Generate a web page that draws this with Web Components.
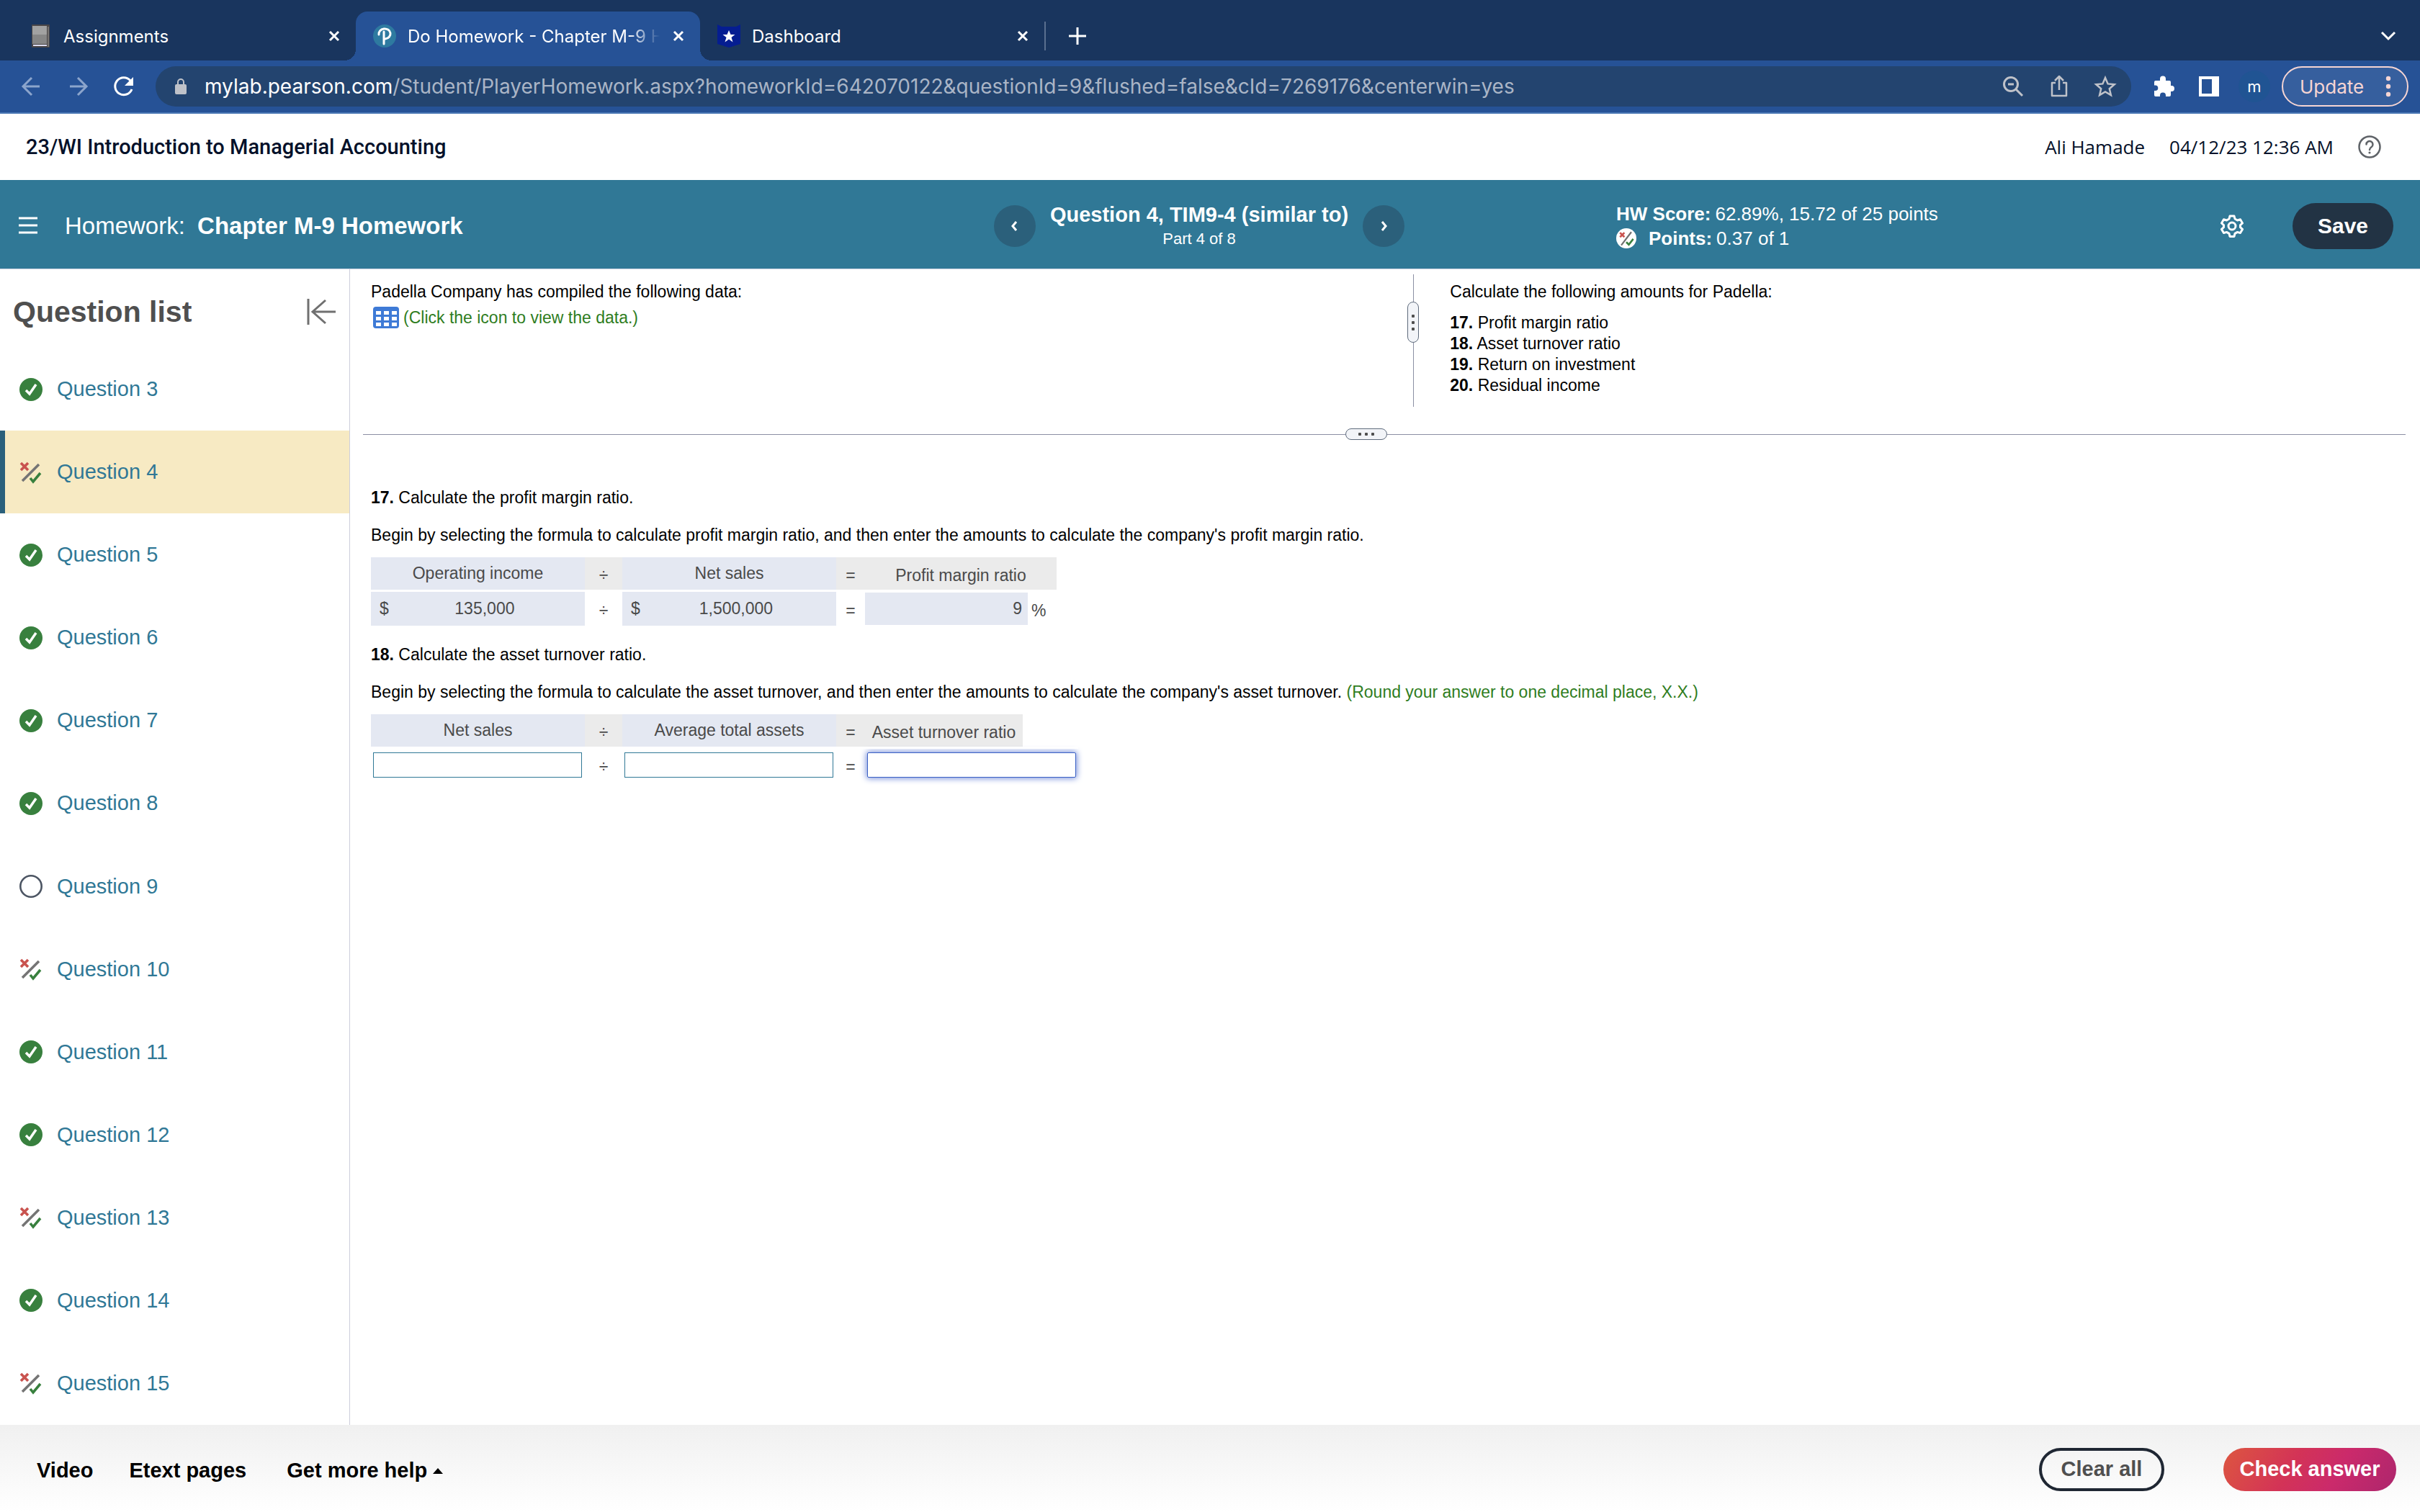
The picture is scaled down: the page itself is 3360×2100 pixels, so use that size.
<!DOCTYPE html>
<html lang="en">
<head>
<meta charset="utf-8">
<title>Do Homework - Chapter M-9 Homework</title>
<style>
  body {
    margin: 0;
    min-height: 100vh;
    display: flex;
    flex-direction: column;
    background: #ffffff;
    color: #000000;
    font-family: "Liberation Sans", Arial, sans-serif;
    font-size: 23px;
    line-height: 29px;
  }
  main { flex: 1; display: flex; }
</style>
</head>
<body>
  <browser-chrome></browser-chrome>
  <course-header user="Ali Hamade" time="04/12/23 12:36 AM">23/WI Introduction to Managerial Accounting</course-header>
  <homework-bar></homework-bar>
  <main>
    <question-list>
      <question-item status="correct">Question 3</question-item>
      <question-item status="partial" current>Question 4</question-item>
      <question-item status="correct">Question 5</question-item>
      <question-item status="correct">Question 6</question-item>
      <question-item status="correct">Question 7</question-item>
      <question-item status="correct">Question 8</question-item>
      <question-item status="open">Question 9</question-item>
      <question-item status="partial">Question 10</question-item>
      <question-item status="correct">Question 11</question-item>
      <question-item status="correct">Question 12</question-item>
      <question-item status="partial">Question 13</question-item>
      <question-item status="correct">Question 14</question-item>
      <question-item status="partial">Question 15</question-item>
    </question-list>
    <problem-panel></problem-panel>
  </main>
  <action-bar></action-bar>

<script>
const icons = {
  close: '<path d="M4 4l12 12M16 4L4 16" fill="none" stroke="currentColor" stroke-width="3"/>',
  plus: '<path d="M12 0v24M0 12h24" fill="none" stroke="currentColor" stroke-width="3"/>',
  chevronDown: '<path d="M3 7l9 9 9-9" fill="none" stroke="currentColor" stroke-width="3"/>',
  back: '<path d="M27 16H4M16 4L4 16l12 12" fill="none" stroke="currentColor" stroke-width="3"/>',
  forward: '<path d="M5 16h23M16 4l12 12-12 12" fill="none" stroke="currentColor" stroke-width="3"/>',
  reload: '<path d="M27 20a12 12 0 1 1-2-12" fill="none" stroke="currentColor" stroke-width="3"/><path d="M29 3v12H17z" fill="currentColor"/>',
  lock: '<rect x="3" y="9" width="16" height="14" rx="2" fill="currentColor"/><path d="M7 10V6a4 4 0 0 1 8 0v4" fill="none" stroke="currentColor" stroke-width="2"/>',
  zoomOut: '<circle cx="13" cy="13" r="9.500" fill="none" stroke="currentColor" stroke-width="3"/><path d="M20 20l9 9M9 13h8" fill="none" stroke="currentColor" stroke-width="3"/>',
  share: '<path d="M11 11H6v18h20V11h-5M16 21V3M10 8l6-6 6 6" fill="none" stroke="currentColor" stroke-width="2.500" stroke-linejoin="round"/>',
  star: '<path d="M16 4l3.600 8.400 9.100.8-6.900 6 2.100 8.900-7.900-4.700-7.900 4.700 2.100-8.900-6.900-6 9.100-.8z" fill="none" stroke="currentColor" stroke-width="2.500" stroke-linejoin="miter"/>',
  puzzle: '<path d="M12 5.500a4 4 0 0 1 8 0V8h5a2 2 0 0 1 2 2v5h1a4 4 0 0 1 0 8h-1v5a2 2 0 0 1-2 2h-5v-1.500a4 4 0 0 0-8 0V30H6a2 2 0 0 1-2-2v-6h1.500a3.800 3.800 0 0 0 0-7.600H4V10a2 2 0 0 1 2-2h6z" fill="currentColor"/>',
  panel: '<path d="M2 2h28v28H2zM6 6v20h14V6z" fill="currentColor" fill-rule="evenodd"/>',
  dots: '<circle cx="5" cy="4" r="3.200" fill="currentColor"/><circle cx="5" cy="15" r="3.200" fill="currentColor"/><circle cx="5" cy="26" r="3.200" fill="currentColor"/>',
  book: '<rect x="4" y="0" width="25" height="32" rx="1" fill="#4a4647"/><rect x="5" y="2" width="20" height="25" fill="#a2a2a2"/><rect x="5" y="14" width="20" height="13" fill="#868686"/><rect x="6" y="28" width="19" height="2" fill="#dcdcf0"/><path d="M27 3v28" stroke="#a2a2a2" stroke-width="1"/>',
  pearson: '<circle cx="16" cy="16" r="16" fill="#2e7aa0"/><path d="M8 14a8 7 0 1 1 9 6M15 10v17" fill="none" stroke="#ffffff" stroke-width="3" stroke-linecap="round"/>',
  shield: '<path d="M0 0l6 3h20l6-3v27l-16 5L0 27z" fill="#051d91"/><path d="M16 8l2.500 6h6l-5 4 2 6.500-5.500-4-5.500 4 2-6.500-5-4h6z" fill="#ffffff"/>',
  help: '<circle cx="16" cy="16" r="14.500" fill="none" stroke="currentColor" stroke-width="2.500"/><path d="M11.500 12.500a4.500 4.500 0 1 1 7 3.800c-1.800 1.200-2.500 2-2.500 3.700" fill="none" stroke="currentColor" stroke-width="2.500" stroke-linecap="round"/><circle cx="16" cy="24" r="1.600" fill="currentColor"/>',
  menu: '<path d="M0 2h26M0 12h26M0 22h26" stroke="currentColor" stroke-width="3"/>',
  left: '<path d="M11 3L6 9l5 6" fill="none" stroke="currentColor" stroke-width="3"/>',
  right: '<path d="M7 3l5 6-5 6" fill="none" stroke="currentColor" stroke-width="3"/>',
  gear: '<path d="M13 2h6l1 4 3.500 2 4-1.200 3 5.200-3 2.700v3l3 2.700-3 5.200-4-1.200-3.500 2-1 4h-6l-1-4-3.500-2-4 1.200-3-5.200 3-2.700v-3l-3-2.700 3-5.200 4 1.200 3.500-2z" fill="none" stroke="currentColor" stroke-width="3" stroke-linejoin="round"/><circle cx="16" cy="16" r="5" fill="none" stroke="currentColor" stroke-width="3"/>',
  collapse: '<path d="M2 2v36M40 20H8M26 4L8 20l18 16" fill="none" stroke="currentColor" stroke-width="3"/>',
  correct: '<circle cx="16" cy="16" r="16" fill="#38803e"/><path d="M9 17l5 5 9-13" fill="none" stroke="#ffffff" stroke-width="3.500"/>',
  partial: '<path d="M2 3l10 10M12 3L2 13" stroke="#c9534f" stroke-width="3.600"/><path d="M27 5L4 28" stroke="#747474" stroke-width="3.600"/><path d="M15 24l4 5 10-12" fill="none" stroke="#38803e" stroke-width="3.600"/>',
  open: '<circle cx="16" cy="16" r="14.700" fill="none" stroke="#4c5563" stroke-width="2.600"/>',
  score: '<circle cx="16" cy="16" r="16" fill="#ffffff"/><path d="M6 7l7 7M13 7l-7 7" stroke="#c9534f" stroke-width="3"/><path d="M24 6L8 27" stroke="#707070" stroke-width="2.500"/><path d="M16 22l4 4 7-9" fill="none" stroke="#38803e" stroke-width="3"/>',
  grid: '<rect width="36" height="30" rx="4" fill="#3e7ad6"/><path d="M4 6h7v5H4zm11 0h7v5h-7zm11 0h7v5h-7zM4 14h7v5H4zm11 0h7v5h-7zm11 0h7v5h-7zM4 22h7v5H4zm11 0h7v5h-7zm11 0h7v5h-7z" fill="#ffffff"/>',
  caretUp: '<path d="M0 9l8-9 8 9z" fill="currentColor"/>'
};

function icon(name, width, height = width, box = `0 0 ${width} ${height}`) {
  return `<svg width="${width}" height="${height}" viewBox="${box}" aria-hidden="true">${icons[name]}</svg>`;
}

// Shared by every shadow root
const base = `
  :host, * { box-sizing: border-box; }
  svg { display: block; flex: none; }
  button, input { font: inherit; color: inherit; margin: 0; }
  button { background: none; border: 0; padding: 0; cursor: pointer; }
  a { color: inherit; text-decoration: none; }
  p, h1, h2, ol, ul { margin: 0; padding: 0; font-size: inherit; font-weight: inherit; }
`;

class BaseElement extends HTMLElement {
  constructor() {
    super();
    this.attachShadow({ mode: 'open' });
  }

  connectedCallback() {
    this.shadowRoot.innerHTML = `<style>${base}${this.styles()}</style>${this.template()}`;
  }
}

class BrowserTab extends BaseElement {
  styles() {
    return `
      :host {
        display: flex;
        align-items: center;
        gap: 16px;
        width: 478px;
        height: 68px;
        padding: 0 20px 0 24px;
        position: relative;
        color: #ffffff;
      }
      :host([active]) { background: #265296; border-radius: 16px 16px 0 0; }
      :host([active])::before, :host([active])::after {
        content: '';
        position: absolute;
        bottom: 0;
        width: 16px; height: 16px;
      }
      :host([active])::before { left: -16px; background: radial-gradient(circle at 0 0, transparent 16px, #265296 16px); }
      :host([active])::after { right: -16px; background: radial-gradient(circle at 100% 0, transparent 16px, #265296 16px); }
      .title { flex: 1; min-width: 0; overflow: hidden; white-space: nowrap; }
      :host([active]) .title {
        -webkit-mask-image: linear-gradient(to right, #000 88%, transparent 100%);
        mask-image: linear-gradient(to right, #000 88%, transparent 100%);
      }
    `;
  }

  template() {
    return `
      ${icon(this.getAttribute('icon'), 32)}
      <span class="title"><slot></slot></span>
      <button aria-label="Close tab">${icon('close', 20)}</button>
    `;
  }
}

class BrowserChrome extends BaseElement {
  styles() {
    return `
      :host { display: block; font-family: Inter, Roboto, sans-serif; font-size: 24px; color: #ffffff; }
      .strip { display: flex; align-items: center; height: 84px; padding: 16px 32px 0 16px; background: #19355e; }
      .new { display: flex; align-items: center; justify-content: center; width: 90px; height: 40px; border-left: 2px solid #5a6f8f; }
      .more { margin-left: auto; }
      .toolbar { display: flex; align-items: center; gap: 32px; height: 74px; padding: 0 16px 0 28px; background: #265296; border-bottom: 2px solid #4b78b5; }
      .dim { color: #8ca5cc; }
      .address { flex: 1; display: flex; align-items: center; gap: 32px; height: 56px; margin-left: -4px; padding: 0 20px 0 24px; border-radius: 28px; background: #23446f; color: #bfc2c9; }
      .url { flex: 1; margin-left: -10px; font-size: 28px; color: #aab5c6; }
      .url b { font-weight: 400; color: #ffffff; }
      .actions { display: flex; align-items: center; gap: 32px; margin-left: -4px; }
      .avatar { display: flex; align-items: center; justify-content: center; width: 44px; height: 44px; margin: 0 -7px; border-radius: 50%; background: #205493; font-size: 22px; }
      .update { display: flex; align-items: center; justify-content: space-between; width: 176px; height: 56px; margin-left: -9px; padding: 0 21px 0 23px; border: 2px solid #f6d5d3; border-radius: 28px; background: #365f9e; color: #f6d5d3; font-size: 26px; }
    `;
  }

  template() {
    return `
      <div class="strip">
        <browser-tab icon="book">Assignments</browser-tab>
        <browser-tab icon="pearson" active>Do Homework - Chapter M-9 Homework</browser-tab>
        <browser-tab icon="shield">Dashboard</browser-tab>
        <button class="new" aria-label="New tab">${icon('plus', 24)}</button>
        <button class="more" aria-label="Search tabs">${icon('chevronDown', 24)}</button>
      </div>
      <div class="toolbar">
        <button class="dim" aria-label="Back">${icon('back', 32)}</button>
        <button class="dim" aria-label="Forward">${icon('forward', 32)}</button>
        <button aria-label="Reload">${icon('reload', 32)}</button>
        <div class="address">
          ${icon('lock', 22, 24)}
          <span class="url"><b>mylab.pearson.com</b>/Student/PlayerHomework.aspx?homeworkId=642070122&amp;questionId=9&amp;flushed=false&amp;cId=7269176&amp;centerwin=yes</span>
          <button aria-label="Zoom">${icon('zoomOut', 32)}</button>
          <button aria-label="Share">${icon('share', 32)}</button>
          <button aria-label="Bookmark">${icon('star', 32)}</button>
        </div>
        <div class="actions">
          <button aria-label="Extensions">${icon('puzzle', 32)}</button>
          <button aria-label="Side panel">${icon('panel', 32)}</button>
          <button class="avatar">m</button>
          <button class="update">Update ${icon('dots', 10, 30)}</button>
        </div>
      </div>
    `;
  }
}

class CourseHeader extends BaseElement {
  styles() {
    return `
      :host {
        display: flex;
        align-items: center;
        gap: 34px;
        height: 92px;
        padding: 0 54px 0 36px;
        color: #05112a;
        font-family: "Open Sans", "Noto Sans", sans-serif;
        font-size: 26px;
      }
      h1 { flex: 1; font-family: Roboto, sans-serif; font-size: 29px; font-weight: 500; }
      button { color: #5f6368; }
    `;
  }

  template() {
    return `
      <h1><slot></slot></h1>
      <span>${this.getAttribute('user')}</span>
      <span>${this.getAttribute('time')}</span>
      <button aria-label="Help">${icon('help', 32)}</button>
    `;
  }
}

class HomeworkBar extends BaseElement {
  styles() {
    return `
      :host {
        display: grid;
        grid-template-columns: 138fr 57fr 29fr 112fr;
        align-items: center;
        height: 124px;
        padding-top: 4px;
        background: #307896;
        border-bottom: 1px solid #c7cfe0;
        color: #ffffff;
      }
      .name { display: flex; align-items: center; gap: 38px; padding-left: 26px; font-size: 33px; line-height: 40px; }
      .name b { margin-left: 8px; }
      .nav { display: flex; align-items: center; justify-content: space-between; text-align: center; }
      .nav button { display: flex; align-items: center; justify-content: center; width: 58px; height: 58px; border-radius: 50%; background: #2b607b; }
      .nav b { display: block; font-size: 29px; line-height: 36px; }
      .nav span { display: block; font-size: 22px; line-height: 32px; }
      .score { grid-column: 4; display: flex; align-items: center; gap: 68px; padding: 0 37px 0 4px; font-size: 26px; line-height: 34px; }
      .score div { flex: 1; }
      .score p { display: flex; align-items: center; gap: 6px; white-space: nowrap; }
      .score svg + b { margin-left: 11px; }
      .save { width: 140px; height: 64px; border-radius: 32px; background: #223344; font-size: 30px; font-weight: 700; }
    `;
  }

  template() {
    return `
      <div class="name">
        <button aria-label="Menu">${icon('menu', 26)}</button>
        <span>Homework: <b>Chapter M-9 Homework</b></span>
      </div>
      <div class="nav">
        <button aria-label="Previous question">${icon('left', 18)}</button>
        <div><b>Question 4, TIM9-4 (similar to)</b><span>Part 4 of 8</span></div>
        <button aria-label="Next question">${icon('right', 18)}</button>
      </div>
      <div class="score">
        <div>
          <p><b>HW Score:</b> 62.89%, 15.72 of 25 points</p>
          <p>${icon('score', 28, 28, '0 0 32 32')} <b>Points:</b> 0.37 of 1</p>
        </div>
        <button aria-label="Settings">${icon('gear', 32)}</button>
        <button class="save">Save</button>
      </div>
    `;
  }
}

class QuestionItem extends BaseElement {
  styles() {
    return `
      :host { flex: 1; display: flex; font-size: 29px; color: #307896; }
      a { flex: 1; display: flex; align-items: center; gap: 20px; padding-left: 20px; border-left: 7px solid transparent; }
      :host([current]) a { background: #f7eac3; border-color: #2b607b; }
    `;
  }

  template() {
    return `<a href="#">${icon(this.getAttribute('status'), 32)}<slot></slot></a>`;
  }
}

class QuestionList extends BaseElement {
  styles() {
    return `
      :host { display: flex; flex-direction: column; width: 486px; flex: none; border-right: 1px solid #cdcedc; }
      header { display: flex; align-items: center; justify-content: space-between; height: 109px; padding: 8px 19px 0 18px; color: #4f4f4f; }
      h2 { font-size: 41px; line-height: 50px; font-weight: 700; }
      header button { color: #707070; }
      nav { flex: 1; display: flex; flex-direction: column; }
    `;
  }

  template() {
    return `
      <header>
        <h2>Question list</h2>
        <button aria-label="Collapse list">${icon('collapse', 40)}</button>
      </header>
      <nav><slot></slot></nav>
    `;
  }
}

class SplitHandle extends BaseElement {
  styles() {
    return `
      :host { display: flex; align-items: center; }
      .line { background: #8c8fa3; }
      button { display: flex; align-items: center; justify-content: center; gap: 5px; flex: none; border: 1px solid #5f6b7c; border-radius: 8px; background: #f2f4f8; }
      i { width: 4px; height: 4px; background: #4f4f4f; border-radius: 1px; }
      :host([axis="x"]) .line { height: 1px; flex: 28; }
      :host([axis="x"]) .before { flex: 27; }
      :host([axis="x"]) button { width: 58px; height: 16px; }
      :host([axis="y"]) { flex-direction: column; }
      :host([axis="y"]) .line { width: 1px; flex: 1; }
      :host([axis="y"]) .before { flex: 0 0 38px; }
      :host([axis="y"]) button { width: 16px; height: 57px; flex-direction: column; }
    `;
  }

  template() {
    return `
      <div class="line before"></div>
      <button aria-label="Resize"><i></i><i></i><i></i></button>
      <div class="line"></div>
    `;
  }
}

class FormulaTable extends BaseElement {
  styles() {
    return `
      :host { display: block; margin: 16px 0 26px; color: #4a4a4a; }
      table { border-collapse: collapse; table-layout: fixed; }
      th, td { height: 45px; padding: 0; font-weight: 400; text-align: center; }
      tbody td { border-top: 3px solid #ffffff; height: 48px; }
      .term { width: 297px; }
      .divide { width: 52px; }
      .equals { width: 40px; }
      .result { text-align: left; }
      th.term, .filled { background: #e4e8f2; background-clip: padding-box; }
      th.divide, th.equals, .result span { background: #ebebeb; }
      .divide, .equals, .unit { padding-top: 6px; }
      .result span { display: block; height: 45px; line-height: 39px; padding-top: 6px; text-align: center; }
      .money { display: flex; padding: 0 6px 0 12px; }
      .money span { flex: 1; text-align: center; }
      .answer { display: flex; align-items: center; height: 45px; gap: 5px; }
      .answer .filled { width: 226px; height: 45px; line-height: 45px; padding-right: 8px; text-align: right; }
      input { display: block; width: 290px; height: 35px; margin: 0 3px; border: 1px solid #307896; background: #ffffff; padding: 0 6px; outline: none; }
      input.focus { border-color: #3a60c4; border-radius: 2px; box-shadow: 0 0 8px 1px #6f88d8; }
    `;
  }

  template() {
    const [a, b] = this.getAttribute('terms').split('|');
    const values = this.getAttribute('values');
    const width = this.getAttribute('result-width');
    return `
      <table>
        <thead>
          <tr>
            <th class="term" id="a">${a}</th>
            <th class="divide">÷</th>
            <th class="term" id="b">${b}</th>
            <th class="equals">=</th>
            <th class="result" id="r"><span style="width: ${width}px">${this.getAttribute('result')}</span></th>
          </tr>
        </thead>
        <tbody>${values ? this.filled(values.split('|')) : this.blank()}</tbody>
      </table>
    `;
  }

  filled([a, b, result]) {
    return `
      <tr>
        <td class="filled"><div class="money">$<span>${a}</span></div></td>
        <td class="divide">÷</td>
        <td class="filled"><div class="money">$<span>${b}</span></div></td>
        <td class="equals">=</td>
        <td><div class="answer"><div class="filled">${result}</div><div class="unit">%</div></div></td>
      </tr>
    `;
  }

  blank() {
    return `
      <tr>
        <td><input type="text" aria-labelledby="a"></td>
        <td class="divide">÷</td>
        <td><input type="text" aria-labelledby="b"></td>
        <td class="equals">=</td>
        <td><input type="text" class="focus" aria-labelledby="r"></td>
      </tr>
    `;
  }
}

class ProblemPanel extends BaseElement {
  styles() {
    return `
      :host { flex: 1; display: block; padding: 7px 20px 0 18px; }
      .intro { display: grid; grid-template-columns: 18fr 16px 17fr; height: 184px; margin-bottom: 30px; }
      .given { padding: 10px 0 0 11px; }
      .asked { padding: 10px 0 0 43px; }
      .data { display: flex; align-items: center; gap: 6px; margin: 6px 0 0 3px; }
      .green { color: #2f7d1e; }
      ul { list-style: none; margin-top: 14px; }
      .work { padding: 66px 0 0 11px; }
      .work p + p { margin-top: 23px; }
    `;
  }

  template() {
    return `
      <section class="intro">
        <div class="given">
          <p>Padella Company has compiled the following data:</p>
          <a href="#" class="data green">${icon('grid', 36, 30)} (Click the icon to view the data.)</a>
        </div>
        <split-handle axis="y"></split-handle>
        <div class="asked">
          <p>Calculate the following amounts for Padella:</p>
          <ul>
            <li><b>17.</b> Profit margin ratio</li>
            <li><b>18.</b> Asset turnover ratio</li>
            <li><b>19.</b> Return on investment</li>
            <li><b>20.</b> Residual income</li>
          </ul>
        </div>
      </section>
      <split-handle axis="x"></split-handle>
      <section class="work">
        <p><b>17.</b> Calculate the profit margin ratio.</p>
        <p>Begin by selecting the formula to calculate profit margin ratio, and then enter the amounts to calculate the company's profit margin ratio.</p>
        <formula-table terms="Operating income|Net sales" result="Profit margin ratio" result-width="266" values="135,000|1,500,000|9"></formula-table>
        <p><b>18.</b> Calculate the asset turnover ratio.</p>
        <p>Begin by selecting the formula to calculate the asset turnover, and then enter the amounts to calculate the company's asset turnover. <span class="green">(Round your answer to one decimal place, X.X.)</span></p>
        <formula-table terms="Net sales|Average total assets" result="Asset turnover ratio" result-width="219"></formula-table>
      </section>
    `;
  }
}

class ActionBar extends BaseElement {
  styles() {
    return `
      :host {
        display: flex;
        align-items: center;
        gap: 50px;
        height: 121px;
        padding: 2px 33px 0 51px;
        background: linear-gradient(#f0f0f0, #ffffff);
        font-size: 29px;
        font-weight: 700;
      }
      a { padding-top: 4px; }
      .help { display: flex; align-items: center; gap: 8px; margin-left: 6px; }
      button { height: 60px; border-radius: 30px; }
      .clear { margin-left: auto; width: 174px; border: 4px solid #1f2733; color: #4f4f4f; }
      .check { width: 240px; margin-left: 32px; background: linear-gradient(120deg, #dd5640, #d33357 40%, #cb2a6b 65%, #ad266d); color: #ffffff; }
    `;
  }

  template() {
    return `
      <a href="#">Video</a>
      <a href="#">Etext pages</a>
      <a href="#" class="help">Get more help ${icon('caretUp', 14, 8, '0 0 16 9')}</a>
      <button class="clear">Clear all</button>
      <button class="check">Check answer</button>
    `;
  }
}

customElements.define('browser-tab', BrowserTab);
customElements.define('browser-chrome', BrowserChrome);
customElements.define('course-header', CourseHeader);
customElements.define('homework-bar', HomeworkBar);
customElements.define('question-item', QuestionItem);
customElements.define('question-list', QuestionList);
customElements.define('split-handle', SplitHandle);
customElements.define('formula-table', FormulaTable);
customElements.define('problem-panel', ProblemPanel);
customElements.define('action-bar', ActionBar);
</script>
</body>
</html>
